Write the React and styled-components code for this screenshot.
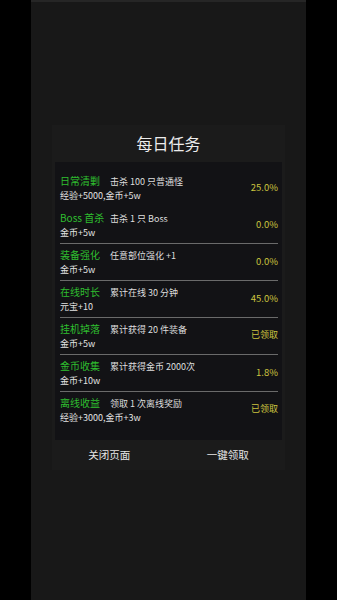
import React from "react";
import styled, { createGlobalStyle } from "styled-components";

const Global = createGlobalStyle`
  html, body { margin: 0; padding: 0; background: #000; }
  body { font-family: "Noto Sans CJK SC", "Noto Sans", sans-serif; }
`;

const Frame = styled.div`
  width: 275px;
  height: 600px;
  margin: 0 auto;
  background: #181818;
  border-top: 2px solid #262626;
  box-sizing: border-box;
  padding-top: 123px;
`;

const Dialog = styled.div`
  width: 233px;
  margin: 0 auto;
  background: #1b1b1b;
  padding: 8px 3px 0;
  box-sizing: border-box;
`;

const Title = styled.div`
  color: #ececec;
  font-size: 16px;
  line-height: 20px;
  text-align: center;
  margin-bottom: 9px;
`;

const List = styled.div`
  background: #121215;
  padding: 7px 4px 12px 5px;
`;

const Row = styled.div`
  display: grid;
  grid-template-columns: 1fr auto;
  align-items: center;
  height: 36px;
  border-top: 1px solid ${(p) => (p.$divider ? "#6a6a6a" : "transparent")};
  padding: 0 0 0 0;
`;

const Info = styled.div`
  display: flex;
  flex-direction: column;
`;

const Line = styled.div`
  display: flex;
  align-items: baseline;
  height: 15px;
  line-height: 15px;
`;

const TaskName = styled.span`
  width: 50px;
  flex: none;
  color: #2fbf2f;
  font-size: 10px;
  white-space: nowrap;
`;

const Desc = styled.span`
  color: #dedede;
  font-size: 9px;
  white-space: nowrap;
`;

const Reward = styled.div`
  color: #e2e2e2;
  font-size: 9px;
  line-height: 15px;
  height: 15px;
  white-space: nowrap;
`;

const Status = styled.div`
  color: #cbc33f;
  font-size: ${(p) => (p.$claimed ? "9px" : "9.5px")};
  text-align: right;
  margin-top: -3px;
`;

const Buttons = styled.div`
  display: flex;
  height: 30px;
  align-items: center;
`;

const Btn = styled.div`
  flex: 1;
  text-align: center;
  color: #e6e6e6;
  font-size: 10.5px;
  margin: ${(p) => (p.$right ? "0 0 0 5px" : "0 5px 0 0")};
  padding-bottom: 1px;
`;

const tasks = [
  ["日常清剿", "击杀 100 只普通怪", "经验+5000,金币+5w", "25.0%"],
  ["Boss 首杀", "击杀 1 只 Boss", "金币+5w", "0.0%"],
  ["装备强化", "任意部位强化 +1", "金币+5w", "0.0%"],
  ["在线时长", "累计在线 30 分钟", "元宝+10", "45.0%"],
  ["挂机掉落", "累计获得 20 件装备", "金币+5w", "已领取"],
  ["金币收集", "累计获得金币 2000次", "金币+10w", "1.8%"],
  ["离线收益", "领取 1 次离线奖励", "经验+3000,金币+3w", "已领取"],
];

export default function App() {
  return (
    <>
      <Global />
      <Frame>
        <Dialog>
          <Title>每日任务</Title>
          <List>
            {tasks.map(([name, desc, reward, status], i) => (
              <Row key={name} $divider={i >= 2}>
                <Info>
                  <Line>
                    <TaskName>{name}</TaskName>
                    <Desc>{desc}</Desc>
                  </Line>
                  <Reward>{reward}</Reward>
                </Info>
                <Status $claimed={status === "已领取"}>{status}</Status>
              </Row>
            ))}
          </List>
          <Buttons>
            <Btn>关闭页面</Btn>
            <Btn $right>一键领取</Btn>
          </Buttons>
        </Dialog>
      </Frame>
    </>
  );
}
